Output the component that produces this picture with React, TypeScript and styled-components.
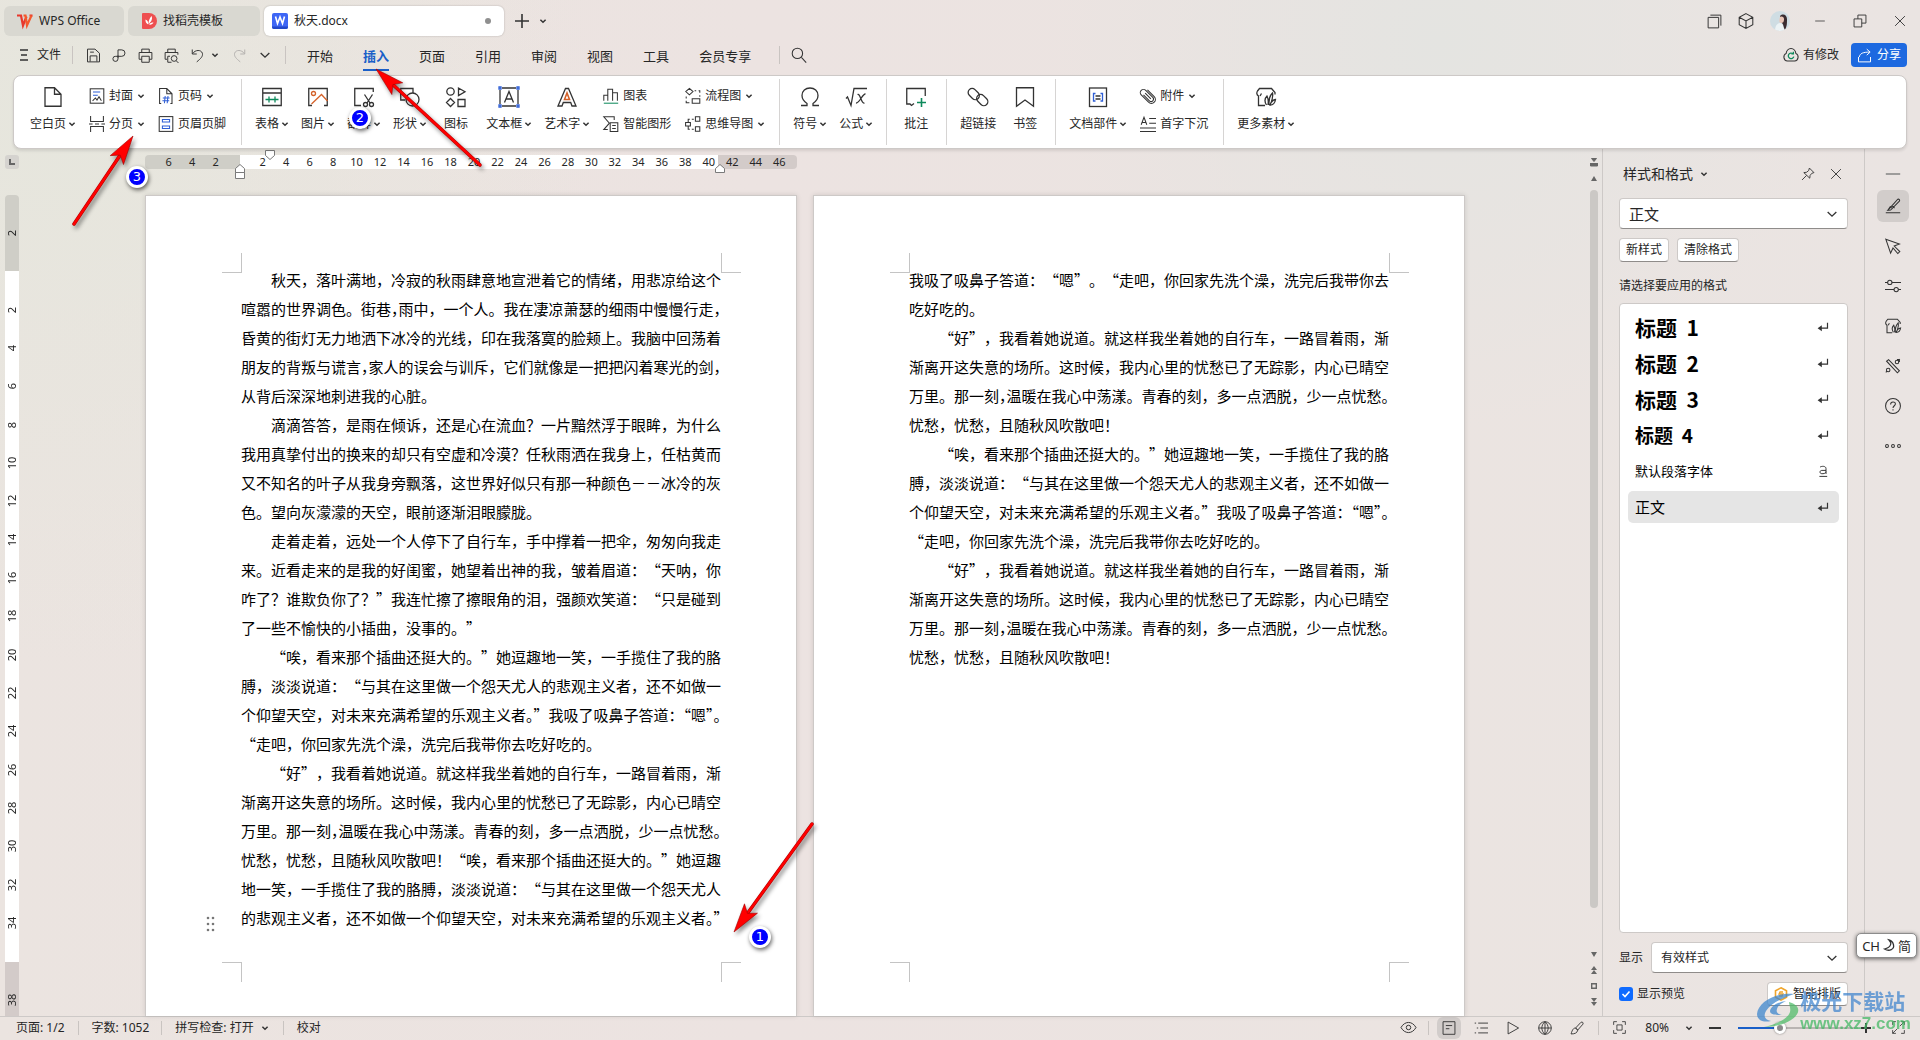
import React from "react";
import styled, { createGlobalStyle, css } from "styled-components";

const INK = "#333333";
const BLUE = "#1a5fc8";
const GREEN = "#0e8a5c";
const ORANGE = "#d4622a";
const LINE = "#cdc9c7";
const UI_FONT = '"Noto Sans", "Noto Sans CJK SC", sans-serif';
const DOC_FONT = '"Noto Sans CJK SC", sans-serif';

const GlobalStyle = createGlobalStyle`
  * { box-sizing: border-box; }
  html, body, #root { height: 100%; }
  body {
    margin: 0;
    overflow: hidden;
    font-family: ${UI_FONT};
    font-size: 12px;
    line-height: 18px;
    color: #262626;
  }
  button, select, input { font: inherit; color: inherit; margin: 0; }
  button { border: 0; padding: 0; background: none; white-space: nowrap; cursor: pointer; }
  svg { display: block; flex: none; }
`;

/* ---------- icons ---------- */

const Svg = styled.svg.attrs({ "aria-hidden": true })`
  fill: none;
  stroke: ${INK};
  stroke-width: 1.3;
  overflow: visible;
`;

const Icon = ({ name, size = 20 }: { name: string; size?: number }) => (
  <Svg width={size} height={size} viewBox="0 0 20 20">
    {ICONS[name]}
  </Svg>
);

const CaretSvg = styled(Svg)<{ $thin: boolean }>`
  stroke-width: ${(p) => (p.$thin ? 0.8 : 1.5)};
`;

const Caret = ({ size = 6 }: { size?: number }) => (
  <CaretSvg width={size} height={size} viewBox="0 0 6 6" $thin={size > 6}>
    <path d="M.4 1.8 3 4.3l2.6-2.5" />
  </CaretSvg>
);

const leaf = (
  <>
    <path d="M9 18.5H2.5V9C.5 8 .5 5.500 1.500 4L3.500 1.500h12L19 5.500v2" />
    <path d="M5.500 6.500 4 9M10.500 18C8 14 9.500 10.500 11 9c1.500 3 1.500 6 1 9M13 18c-.5-6 1.500-10 3.500-12 .8 4-.5 8-2.500 12M14 18c1-3.500 3-5 5.500-5.500-.5 3.500-2 5.500-5.500 5.500z" />
  </>
);

const ICONS: Record<string, React.ReactNode> = {
  blank: <path d="M2 .75h9.500l6.500 6.500v12H2zM11.500 .75v6.500H18" />,
  cover: (
    <>
      <rect x="1.500" y="1" width="17" height="18" />
      <path stroke="#2f5fd6" d="M5 5h9M5 9h6" />
      <path d="m4.500 16 3.500-3.500 2 2.500 2.500-4 3 5" />
    </>
  ),
  split: <path d="M2 0v7h16V0M0 10h4.500M7.500 10h5M15.500 10H20M2 20v-7h16v7" />,
  pageNo: (
    <>
      <path d="M2 20V.75h9l6.500 6.500V20M11 .75v6.500h6.500M2 19.500h2M15.500 19.500h2" />
      <path stroke="#2f5fd6" d="M6 12.500h8.500M5.500 16h8.500M9 10l-1 9M12.500 10l-1 9" />
    </>
  ),
  header: (
    <>
      <rect x="1.500" y=".75" width="17" height="18.500" />
      <path stroke="#2f5fd6" d="M5.500 4.500h9v3h-9zM5.500 12.500h9v3h-9z" />
    </>
  ),
  table: (
    <>
      <path d="M.75 1.500h18.500v17H.75zM.75 6h18.500" />
      <path stroke={GREEN} d="M3.500 12.500h13M7 9.500v6M13 9.500v6" />
    </>
  ),
  picture: (
    <>
      <path d="M4 18.500H.75v-17h18.500v17H16" />
      <path stroke={ORANGE} d="m3.500 17 10-9.500 6 6.500" />
      <circle stroke={ORANGE} cx="5.500" cy="6.500" r="2" />
    </>
  ),
  capture: (
    <>
      <path d="M7 18.500H.75v-17h18.500V5M10.500 7.500 16 16M18.500 7.500 13 16" />
      <circle cx="11.500" cy="17.500" r="2" />
      <circle cx="17.500" cy="17.500" r="2" />
    </>
  ),
  shape: (
    <>
      <path d="M5 13H.75V1.500H13V6" />
      <circle cx="12.500" cy="12.500" r="6.500" />
      <path d="m6.500 10 7 8" />
    </>
  ),
  symbols: (
    <>
      <circle cx="4.500" cy="4.500" r="3.700" />
      <path d="M12.500 1v7.500l6.500-3.800zM4.500 11.500l4 4-4 4-4-4zM12 12.500h7v7h-7z" />
    </>
  ),
  textbox: (
    <>
      <path d="M3 1h14M3 19h14M1 3v14M19 3v14M5.500 15.500 10 4.500l4.500 11M7 12h6" />
      <path stroke="#2f5fd6" d="M0 0h2v2H0zM18 0h2v2h-2zM0 18h2v2H0zM18 18h2v2h-2z" />
    </>
  ),
  wordart: (
    <>
      <path d="M1 19 8.500 1.500h3L19 19h-4l-1.300-3.500H6.300L5 19z" />
      <path stroke={ORANGE} strokeWidth="1.600" d="M7.500 12.500 10 6l2.500 6.500z" />
    </>
  ),
  chart: (
    <>
      <path d="M1 16V9h5M6 16V1.500h6V16M12 6h6v10" />
      <path stroke={GREEN} d="M1 19h18" />
    </>
  ),
  smart: (
    <>
      <path d="M14 5V1H1l7 8-7 8h5" />
      <path d="M9 8.500h9.500v11H9zM11.500 12h4.500M11.500 15.500h4.500" />
    </>
  ),
  flow: (
    <path d="m5.500.5 4.500 4-4.500 4-4.500-4zM12 3.500h2M17 3.500h1.500V6M18.500 9v2M1.500 10.500V13M1.500 16v2.500h4M9 13.500h9.500V19H9z" />
  ),
  mind: (
    <path d="M13 1h5.500v5.500H13zM13 13.500h5.500V19H13zM.75 8h6v4.500h-6zM4 8V4h2M8.500 4H11M4 12.500V16.500h2M8.500 16.500H11" />
  ),
  omega: <path d="M1 18.500h6v-2C3.500 14 2 11.500 2 8.500 2 4 5.500 1 10 1s8 3 8 7.500c0 3-1.500 5.500-5 8v2h6" />,
  formula: (
    <>
      <path d="m0 11.500 1.500-1.500 3.500 8.500L8 1.500h13" />
      <path d="M11.500 7.500c3-1.500 3.500 9.500 7 8.500M19.500 7c-3-.5-6 9.500-9.500 9" />
    </>
  ),
  comment: (
    <>
      <path d="M19.250 9V1.500H.75v15.500H4l1.500 1.500L8 16.500" />
      <path stroke={GREEN} strokeWidth="1.600" d="M11 15.500h9M15.500 11v9" />
    </>
  ),
  link: (
    <>
      <rect x="-.5" y="3" width="12.500" height="8" rx="4" transform="rotate(45 5.700 7)" />
      <rect x="8" y="9" width="12.500" height="8" rx="4" transform="rotate(45 14.200 13)" />
    </>
  ),
  bookmark: <path d="M1.500.75h17v18.500L10 13l-8.500 6.250z" />,
  parts: (
    <>
      <rect x="1.500" y="1" width="17" height="18.500" />
      <path stroke="#2f5fd6" d="M7.500 6.500h-2v7.500h2M12.500 6.500h2v7.500h-2" />
      <path d="M7.500 9h5M7.500 12h5" />
    </>
  ),
  clip: (
    <g transform="rotate(-45 10 10)">
      <path d="M7 5v10.500a3 3 0 0 0 6 0V3a4 4 0 0 0-8 0v13a5 5 0 0 0 10 0V4M10 5v10" />
    </g>
  ),
  dropcap: <path d="M0 15h20M0 19.500h20M11.500 3H20M11.500 9H20M1.500 11 5 1.500 8.500 11M3 8h4.500" />,
  leaf,
  save: <path d="M2 1.500h10L18 7v11.500H2zM5.500 18v-7.500h9V18M5.500 5.500h5" />,
  pdf: <path d="M8 13V2.500h5a4.300 4.300 0 0 1 0 8.600H5a3.400 3.400 0 1 0 3 3.500V10" />,
  print: <path d="M5 6V1.500h10V6M5 15H1.500V6h17v9H15M5 11h10v8H5z" />,
  preview: (
    <>
      <path d="M5 6V1.500h10V6M4 15H1.500V6h17v3M5 11v8h5M5 11h3" />
      <circle cx="13.500" cy="14" r="3.800" />
      <path d="m16.300 17 3 3" />
    </>
  ),
  undo: <path d="M3 2v6h6M3.500 7.500C7 2 15 2 16.500 7c1 4-2 7-7.500 11.500" />,
  redo: <path stroke="#b3b0ae" d="M17 2v6h-6M16.500 7.500C13 2 5 2 3.500 7c-1 4 2 7 7.500 11.500" />,
  search: (
    <>
      <circle cx="8" cy="8" r="6.500" />
      <path d="m13 13 6 6.500" />
    </>
  ),
  copies: <path d="M1.500 4.500h14v14h-14zM4.500 1.500h14v14" />,
  cube: <path d="m10 .75 8.500 4.500v9.500L10 19.250 1.500 14.750v-9.500zM1.500 5.250 10 10l8.500-4.750M10 10v9" />,
  restore: <path d="M1.500 7h11v11.500h-11zM7 7V1.500h11.500V13h-6" />,
  close: <path d="m3 3 14 14M17 3 3 17" />,
  dash: <path d="M2 10h16" />,
  collapse: <path stroke="#8a8a8a" strokeWidth="2" d="M1 10h18" />,
  cloud: (
    <>
      <path d="M5.500 17.500A5 5 0 0 1 4 8a6 6 0 0 1 12 0 5 5 0 0 1-1.500 9.500z" />
      <path stroke={GREEN} strokeWidth="1.600" d="M12.500 8.500A3.500 3.500 0 1 0 13.500 12M10.500 8.500h2.500V6" />
    </>
  ),
  share: <path stroke="#fff" d="M2 12v6.500h16V12M3 12c1-5 5-6.500 14-6.500M13 1.500l4.500 4-4.500 4" />,
  pin: <path d="m12 1.500 6.500 6.500-3 1-2.500 3-.5 4L4 8l4-.5L11 5zM8 12l-6.500 6.500" />,
  pen: <path d="M1 18.500h18M3.500 15.500 16 1.500c1.500-.5 3 1 2 2.500L7 15zM8.500 9.500l3.500 3M3.500 15.500l3-4.500 3 2.500" />,
  cursor: <path d="m1 1.500 17 6-6.500 2.500 7 7-2.500 2.500-6-7-3 6.500z" />,
  sliders: (
    <>
      <circle cx="6" cy="5.500" r="2.700" />
      <circle cx="14" cy="14.500" r="2.700" />
      <path d="M0 5.500h3.300M8.700 5.500H20M0 14.500h11.300M16.700 14.500H20" />
    </>
  ),
  magic: (
    <>
      <path d="m2 4 2.500-2L18 16l-2.500 2.500z" />
      <circle cx="4" cy="15" r="2.200" />
      <circle cx="15" cy="5" r="2.200" />
      <path d="m16.500 3.500 2-2M2.500 16.500l-1.500 1.500M15 2h3v3" />
    </>
  ),
  help: (
    <>
      <circle cx="10" cy="10" r="9.300" />
      <path d="M7 8c0-4 6-4 6-.5 0 2-3 2.500-3 5M10 14v1.500" />
    </>
  ),
  more: (
    <>
      <circle cx="2.500" cy="10" r="1.800" />
      <circle cx="10" cy="10" r="1.800" />
      <circle cx="17.500" cy="10" r="1.800" />
    </>
  ),
  enter: (
    <>
      <path strokeWidth="2" d="M17.500 3v9H5" />
      <path fill={INK} stroke="none" d="M1 12l7-5v10z" />
    </>
  ),
  charStyle: <path strokeWidth="1.600" d="M5 3.500c3-2 10-2 10 2.500v9M15 9H8c-4 0-4 5.500 0 5.500h2c3 0 5-2 5-3.500M4 19h13" />,
  eye: (
    <>
      <path d="M0 10c5-9 15-9 20 0-5 9-15 9-20 0z" />
      <circle cx="10" cy="10" r="3" />
    </>
  ),
  pageView: <path d="M1.500 1h17v18h-17zM5.500 6.500h9M5.500 11h5" />,
  outline: <path d="M6 3h14M9 10h11M6 17h14M1 3h2M4 10h2M1 17h2" />,
  play: <path d="M3 1.500v17l15-8.500z" />,
  globe: (
    <>
      <circle cx="10" cy="10" r="9" />
      <path d="M1 10h18M10 1v18M10 1c-6 5-6 13 0 18M10 1c6 5 6 13 0 18" />
    </>
  ),
  brush: <path d="M8 10 15.500 2c2-1.500 4 .5 3 2.500L11 13zM8 10c-3 0-4.500 2-6.500 8.500C7 18.500 10.500 17 11 13z" />,
  fit: <path d="M1 6V1h5M14 1h5v5M19 14v5h-5M6 19H1v-5M6 6h8v8H6z" />,
  expand: <path d="M1 6V1h5M14 1h5v5M19 14v5h-5M6 19H1v-5M12 8l7-7M8 12l-7 7" />,
};

/* ---------- shell ---------- */

const Shell = styled.div`
  display: flex;
  flex-direction: column;
  height: 100vh;
  position: relative;
  overflow: hidden;
  background:
    radial-gradient(circle at 75% 4%, #e4e4e1 0, rgba(228, 228, 225, 0) 22%),
    radial-gradient(circle at 3% 12%, #e6e6dd 0, rgba(230, 230, 221, 0) 26%),
    linear-gradient(90deg, #ebe4e0, #ece3e1 40%, #ebe4e1 75%, #eae4e2);
`;

const TitleBar = styled.header`
  display: flex;
  align-items: flex-start;
  gap: 4px;
  height: 37px;
  padding: 6px 0 0 4px;
`;

const DocTab = styled.button<{ $width: number; $active?: boolean; $indent: number }>`
  display: flex;
  align-items: center;
  gap: 6px;
  width: ${(p) => p.$width}px;
  height: 30px;
  padding: 0 13px 0 ${(p) => p.$indent}px;
  border-radius: 6px;
  background: ${(p) => (p.$active ? "#ffffff" : "#d9d8d1")};
  box-shadow: ${(p) => (p.$active ? "0 0 2px rgba(0,0,0,.25)" : "none")};
`;

const UnsavedDot = styled.span`
  width: 6px;
  height: 6px;
  margin-left: auto;
  border-radius: 50%;
  background: #8f8f8f;
`;

const IconButton = styled.button<{ $w?: number; $h?: number; $on?: boolean }>`
  display: grid;
  place-items: center;
  flex: none;
  width: ${(p) => p.$w ?? 18}px;
  height: ${(p) => p.$h ?? 30}px;
  border-radius: 6px;
  background: ${(p) => (p.$on ? "#d2cdcb" : "transparent")};
`;

const Spacer = styled.div`
  flex: 1;
`;

const Avatar = styled.span`
  display: grid;
  place-items: center;
  width: 20px;
  height: 20px;
  overflow: hidden;
  border-radius: 50%;
  background: #cfdde3;
`;

const MenuBar = styled.nav`
  display: flex;
  align-items: center;
  height: 38px;
  padding: 0 13px 2px 19px;
`;

const FileButton = styled.button`
  display: flex;
  align-items: center;
  gap: 8px;
`;

const Divider = styled.span<{ $before?: number; $after?: number }>`
  flex: none;
  width: 1px;
  height: 18px;
  margin: 0 ${(p) => p.$after ?? 12}px 0 ${(p) => p.$before ?? 12}px;
  background: #c9c4c1;
`;

const QuickTools = styled.div`
  display: flex;
  align-items: center;
  gap: 8px;
`;

const CaretButton = styled(IconButton)`
  width: 6px;
  margin: 0 4px 0 -2px;
`;

const MenuTabs = styled.div`
  display: flex;
  gap: 30px;
`;

const MenuTab = styled.button<{ $active?: boolean }>`
  height: 28px;
  margin-top: 3px;
  border-bottom: 2px solid transparent;
  font-size: 13px;
  line-height: 26px;
  ${(p) =>
    p.$active &&
    css`
      color: ${BLUE};
      font-weight: 700;
      border-color: ${BLUE};
    `}
`;

const CloudButton = styled.button`
  display: flex;
  align-items: center;
  gap: 4px;
  margin-right: 12px;
`;

const ShareButton = styled.button`
  display: flex;
  align-items: center;
  gap: 5px;
  height: 24px;
  padding: 0 6px;
  border-radius: 4px;
  background: #1d69e0;
  color: #ffffff;
`;

/* ---------- ribbon ---------- */

const Ribbon = styled.section`
  display: flex;
  flex: none;
  height: 74px;
  margin: 0 13px;
  padding-left: 3px;
  border: 1px solid ${LINE};
  border-radius: 8px;
  background: #ffffff;
  box-shadow: 0 2px 3px rgba(0, 0, 0, 0.1);
  position: relative;
  z-index: 1;
`;

const Group = styled.div`
  display: flex;
  align-items: flex-start;
  gap: 13px;
  margin: 3px 0;
  height: 66px;
  padding: 8px 14px 0 13px;
  border-right: 1px solid #d6d4d3;
  &:last-child { border-right: 0; }
`;

const BigButton = styled.button<{ $inset?: number }>`
  display: flex;
  flex-direction: column;
  align-items: center;
  gap: 8px;
  margin: 0 ${(p) => p.$inset ?? 0}px;
`;

const Label = styled.span`
  display: flex;
  align-items: center;
  gap: 3px;
`;

const Stack = styled.div`
  display: flex;
  flex-direction: column;
  gap: 10px;
  padding-left: 1px;
  &:last-child { margin-right: 1px; }
`;

const SmallButton = styled.button`
  display: flex;
  align-items: center;
  gap: 4px;
  & > svg + svg { margin-left: 1px; }
`;

const SmallLabel = styled.span`
  & + svg { margin-left: 1px; }
`;

type Cmd = { icon: string; label: string; caret?: boolean; inset?: number };
type Item = Cmd | Cmd[];

const RIBBON: Item[][] = [
  [
    { icon: "blank", label: "空白页", caret: true },
    [
      { icon: "cover", label: "封面", caret: true },
      { icon: "split", label: "分页", caret: true },
    ],
    [
      { icon: "pageNo", label: "页码", caret: true },
      { icon: "header", label: "页眉页脚" },
    ],
  ],
  [
    { icon: "table", label: "表格", caret: true },
    { icon: "picture", label: "图片", caret: true },
    { icon: "capture", label: "截屏", caret: true },
    { icon: "shape", label: "形状", caret: true },
    { icon: "symbols", label: "图标", inset: 5 },
    { icon: "textbox", label: "文本框", caret: true },
    { icon: "wordart", label: "艺术字", caret: true },
    [
      { icon: "chart", label: "图表" },
      { icon: "smart", label: "智能图形" },
    ],
    [
      { icon: "flow", label: "流程图", caret: true },
      { icon: "mind", label: "思维导图", caret: true },
    ],
  ],
  [
    { icon: "omega", label: "符号", caret: true },
    { icon: "formula", label: "公式", caret: true },
  ],
  [{ icon: "comment", label: "批注", inset: 4 }],
  [
    { icon: "link", label: "超链接" },
    { icon: "bookmark", label: "书签", inset: 4 },
  ],
  [
    { icon: "parts", label: "文档部件", caret: true },
    [
      { icon: "clip", label: "附件", caret: true },
      { icon: "dropcap", label: "首字下沉" },
    ],
  ],
  [{ icon: "leaf", label: "更多素材", caret: true }],
];

/* ---------- workspace ---------- */

const Workspace = styled.main`
  display: flex;
  flex: 1;
  min-height: 0;
`;

const LeftRail = styled.div`
  display: flex;
  flex-direction: column;
  gap: 26px;
  width: 24px;
  padding: 6px 5px 0;
`;

const TabStop = styled.button`
  display: grid;
  place-items: center;
  flex: none;
  width: 14px;
  height: 14px;
  border-radius: 3px;
  background: #d5d3cf;
`;

const VRuler = styled.div`
  flex: 1;
  min-height: 0;
  overflow: hidden;
  padding-top: 19px;
  border-radius: 4px 4px 0 0;
  background: linear-gradient(#cfcec7 76px, #ffffff 76px 767px, #d3cbc9 767px);
`;

const VNumbers = styled.div`
  display: grid;
  grid-template-rows: repeat(21, 1fr);
  height: 805px;
  font-size: 11px;
  line-height: 14px;
  text-align: center;
`;

const VNumber = styled.span`
  writing-mode: vertical-rl;
  transform: rotate(180deg);
`;

const Canvas = styled.div`
  display: flex;
  flex: 1;
  flex-direction: column;
  align-items: center;
  min-width: 0;
  padding-top: 6px;
`;

const Spread = styled.div`
  display: flex;
  flex-direction: column;
  flex: 1;
  gap: 26px;
  min-height: 0;
`;

const HRuler = styled.div`
  position: relative;
  flex: none;
  width: 652px;
  height: 14px;
  padding-left: 12px;
  border-radius: 4px;
  background: linear-gradient(90deg, #cfcec7 95px, #ffffff 95px 573px, #d3cbc9 573px);
`;

const HNumbers = styled.div`
  display: grid;
  grid-template-columns: repeat(27, 1fr);
  width: 634px;
  font-size: 11px;
  line-height: 13px;
  text-align: center;
`;

const IndentMarks = styled.svg`
  position: absolute;
  inset: 0;
  width: 100%;
  height: 100%;
  overflow: visible;
  fill: #ffffff;
  stroke: #7a7a7a;
`;

const Pages = styled.div`
  display: flex;
  flex: 1;
  gap: 16px;
  min-height: 0;
`;

const Page = styled.article`
  position: relative;
  width: 652px;
  padding: 69px 76px 0 95px;
  border: 1px solid ${LINE};
  border-bottom: 0;
  background: #ffffff;
  box-shadow: 0 0 5px rgba(0, 0, 0, 0.12);
  font-family: ${DOC_FONT};
  font-size: 15px;
  line-height: 29px;
  color: #000000;
  white-space: nowrap;
  text-spacing-trim: space-all;
`;

const Paragraph = styled.p<{ $flush?: boolean }>`
  margin: 0;
  text-indent: ${(p) => (p.$flush ? 0 : "2em")};
`;

const HalfWidth = styled.span`
  font-feature-settings: "halt";
`;

const Crop = styled.span<{ $v: "top" | "bottom"; $h: "left" | "right" }>`
  position: absolute;
  width: 20px;
  height: 20px;
  border: 0 solid #c4c4c4;
  ${(p) => (p.$v === "top" ? "top: 57px; border-bottom-width: 1px;" : "top: 766px; border-top-width: 1px;")}
  ${(p) => (p.$h === "left" ? "left: 76px; border-right-width: 1px;" : "right: 55px; border-left-width: 1px;")}
`;

const DragHandle = styled.svg`
  position: absolute;
  left: 60px;
  top: 720px;
  fill: #777777;
`;

/* A "~" after a mark sets that mark at half width. */
const PAGE_ONE: string[][] = [
  [
    "秋天，落叶满地，冷寂的秋雨肆意地宣泄着它的情绪，用悲凉给这个",
    "喧嚣的世界调色。街巷，~雨中，一个人。我在凄凉萧瑟的细雨中慢慢行走，",
    "昏黄的街灯无力地洒下冰冷的光线，印在我落寞的脸颊上。我脑中回荡着",
    "朋友的背叛与谎言，~家人的误会与训斥，它们就像是一把把闪着寒光的剑，",
    "从背后深深地刺进我的心脏。",
  ],
  [
    "滴滴答答，是雨在倾诉，还是心在流血？一片黯然浮于眼眸，为什么",
    "我用真挚付出的换来的却只有空虚和冷漠？任秋雨洒在我身上，任枯黄而",
    "又不知名的叶子从我身旁飘落，这世界好似只有那一种颜色－－冰冷的灰",
    "色。望向灰濛濛的天空，眼前逐渐泪眼朦胧。",
  ],
  [
    "走着走着，远处一个人停下了自行车，手中撑着一把伞，匆匆向我走",
    "来。近看走来的是我的好闺蜜，她望着出神的我，皱着眉道：“天呐，你",
    "咋了？谁欺负你了？”我连忙擦了擦眼角的泪，强颜欢笑道：“只是碰到",
    "了一些不愉快的小插曲，没事的。”",
  ],
  [
    "“唉，看来那个插曲还挺大的。”她逗趣地一笑，一手揽住了我的胳",
    "膊，淡淡说道：“与其在这里做一个怨天尤人的悲观主义者，还不如做一",
    "个仰望天空，对未来充满希望的乐观主义者。~”我吸了吸鼻子答道：~“嗯”~。",
    "“走吧，你回家先洗个澡，洗完后我带你去吃好吃的。",
  ],
  [
    "“好”，我看着她说道。就这样我坐着她的自行车，一路冒着雨，渐",
    "渐离开这失意的场所。这时候，我内心里的忧愁已了无踪影，内心已晴空",
    "万里。那一刻，~温暖在我心中荡漾。青春的刻，多一点洒脱，少一点忧愁。",
    "忧愁，忧愁，且随秋风吹散吧！“唉，看来那个插曲还挺大的。”她逗趣",
    "地一笑，一手揽住了我的胳膊，淡淡说道：“与其在这里做一个怨天尤人",
    "的悲观主义者，还不如做一个仰望天空，对未来充满希望的乐观主义者。~”",
  ],
];

const GOOD = [
  "“好”，我看着她说道。就这样我坐着她的自行车，一路冒着雨，渐",
  "渐离开这失意的场所。这时候，我内心里的忧愁已了无踪影，内心已晴空",
  "万里。那一刻，~温暖在我心中荡漾。青春的刻，多一点洒脱，少一点忧愁。",
  "忧愁，忧愁，且随秋风吹散吧！",
];

const PAGE_TWO: string[][] = [
  ["我吸了吸鼻子答道：“嗯”。“走吧，你回家先洗个澡，洗完后我带你去", "吃好吃的。"],
  GOOD,
  PAGE_ONE[3],
  GOOD,
];

const typeset = (line: string) =>
  line.split(/(.~)/).map((part, i) =>
    part.endsWith("~") ? <HalfWidth key={i}>{part[0]}</HalfWidth> : part
  );

const Text = ({ paragraphs, continued }: { paragraphs: string[][]; continued?: boolean }) => (
  <>
    {paragraphs.map((lines, i) => (
      <Paragraph key={i} $flush={continued && i === 0}>
        {lines.map((line, j) => (
          <React.Fragment key={j}>
            {j > 0 && <br />}
            {typeset(line)}
          </React.Fragment>
        ))}
      </Paragraph>
    ))}
    <Crop $v="top" $h="left" />
    <Crop $v="top" $h="right" />
    <Crop $v="bottom" $h="left" />
    <Crop $v="bottom" $h="right" />
  </>
);

const ScrollRail = styled.div`
  display: flex;
  flex-direction: column;
  align-items: center;
  width: 16px;
  padding: 5px 0 6px;
`;

const Thumb = styled.div`
  flex: 1;
  width: 8px;
  margin: 4px 0 38px;
  border-radius: 4px;
  background: #cbc8c5;
`;

const ScrollButton = styled.button`
  display: grid;
  place-items: center;
  width: 16px;
  height: 16px;
  svg { fill: #666666; stroke: #666666; }
`;

/* ---------- style panel ---------- */

const Panel = styled.aside`
  display: flex;
  flex-direction: column;
  gap: 9px;
  width: 262px;
  padding: 0 16px 10px;
  border-left: 1px solid ${LINE};
`;

const PanelHeader = styled.div`
  display: flex;
  align-items: center;
  height: 40px;
  padding: 10px 5px 0 4px;
  gap: 8px;
`;

const PanelTitle = styled.h2`
  margin: 0;
  font-size: 14px;
  font-weight: 400;
`;

const PanelActions = styled.div`
  display: flex;
  gap: 14px;
  margin-left: auto;
`;

const SelectBox = styled.div<{ $size: number }>`
  display: grid;
  flex: 1;
  align-items: center;
  height: 31px;
  border: 1px solid ${LINE};
  border-bottom-color: #8f8c8a;
  border-radius: 4px;
  background: #ffffff;
  font-size: ${(p) => p.$size}px;
  & > * { grid-area: 1 / 1; }
  & > svg { justify-self: end; margin-right: 10px; pointer-events: none; }
`;

const Select = styled.select`
  width: 100%;
  height: 29px;
  padding: 0 9px;
  border: 0;
  background: transparent;
  appearance: none;
  outline: none;
`;

const FieldRow = styled.div`
  display: flex;
  align-items: center;
  flex: none;
  gap: 8px;
`;

const OutlineButton = styled.button`
  display: flex;
  align-items: center;
  gap: 5px;
  height: 24px;
  padding: 0 6px;
  border: 1px solid ${LINE};
  border-bottom-color: #8f8c8a;
  border-radius: 4px;
  background: #ffffff;
`;

const Caption = styled.div`
  padding: 6px 0 0;
`;

const StyleList = styled.ul`
  display: flex;
  flex: 1;
  flex-direction: column;
  gap: 4px;
  margin: -1px 0 0;
  padding: 7px 8px;
  border: 1px solid ${LINE};
  border-radius: 4px;
  background: #ffffff;
  list-style: none;
`;

const StyleItem = styled.button<{ $size: number; $bold?: boolean; $on?: boolean }>`
  display: flex;
  align-items: center;
  justify-content: space-between;
  width: 100%;
  height: 32px;
  padding: 0 10px 0 7px;
  border-radius: 5px;
  background: ${(p) => (p.$on ? "#e5e5e5" : "transparent")};
  font-family: ${DOC_FONT};
  font-size: ${(p) => p.$size}px;
  font-weight: ${(p) => (p.$bold ? 700 : 400)};
  line-height: 32px;
  color: #000000;
  white-space: pre;
`;

const CheckLabel = styled.label`
  display: flex;
  align-items: center;
  gap: 4px;
  margin-right: auto;
`;

const CheckCell = styled.span`
  display: grid;
  place-items: center;
  & > * { grid-area: 1 / 1; }
  svg { pointer-events: none; }
`;

const Check = styled.input`
  width: 14px;
  height: 14px;
  border-radius: 3px;
  background: #0f6bff;
  appearance: none;
`;

const SideBar = styled.nav`
  display: flex;
  flex-direction: column;
  align-items: center;
  gap: 8px;
  width: 56px;
  padding-top: 17px;
  border-left: 1px solid ${LINE};
`;

/* ---------- status bar ---------- */

const StatusBar = styled.footer`
  display: flex;
  align-items: center;
  flex: none;
  height: 24px;
  padding: 0 13px 2px 16px;
  border-top: 1px solid ${LINE};
`;

const StatusText = styled.div`
  display: flex;
  align-items: center;
`;

const StatusButton = styled.button`
  display: flex;
  align-items: center;
  gap: 8px;
`;

const StatusDivider = styled(Divider)`
  height: 14px;
`;

const ViewButtons = styled.div`
  display: flex;
  align-items: center;
  gap: 8px;
`;

const ZoomTools = styled.div`
  display: flex;
  align-items: center;
  gap: 17px;
`;

const ZoomSlide = styled.div`
  display: flex;
  align-items: center;
  gap: 2px;
`;

const Zoom = styled.input`
  width: 120px;
  height: 12px;
  background: transparent;
  appearance: none;
  &::-webkit-slider-runnable-track {
    height: 2px;
    background: linear-gradient(90deg, ${BLUE} 35%, #b9b4b2 35%);
  }
  &::-webkit-slider-thumb {
    width: 12px;
    height: 12px;
    margin-top: -5px;
    border: 3px solid #ffffff;
    border-radius: 50%;
    background: #8a8a8a;
    box-shadow: 0 0 2px rgba(0, 0, 0, 0.5);
    appearance: none;
  }
`;

/* ---------- overlays ---------- */

const Notes = styled.svg`
  position: absolute;
  inset: 0;
  z-index: 3;
  width: 100%;
  height: 100%;
  pointer-events: none;
  filter: drop-shadow(2px 3px 2px rgba(0, 0, 0, 0.45));
`;

const NoteBadge = styled.span<{ $x: number; $y: number }>`
  position: absolute;
  z-index: 4;
  left: ${(p) => p.$x - 11}px;
  top: ${(p) => p.$y - 11}px;
  width: 22px;
  height: 22px;
  border: 3px solid #ffffff;
  border-radius: 50%;
  background: #0000ff;
  box-shadow: 1px 2px 4px rgba(0, 0, 0, 0.6);
  font-family: "DejaVu Sans", sans-serif;
  font-size: 13px;
  line-height: 16px;
  text-align: center;
  color: #ffffff;
`;

const ImeBar = styled.div`
  position: absolute;
  z-index: 3;
  right: 3px;
  bottom: 82px;
  display: flex;
  align-items: center;
  gap: 3px;
  height: 25px;
  padding: 0 5px;
  border: 1px solid #8c8c8c;
  border-radius: 5px;
  background: #ffffff;
  box-shadow: 0 1px 4px rgba(0, 0, 0, 0.6);
  font-size: 13px;
`;

const Watermark = styled.div`
  position: absolute;
  z-index: 4;
  right: 9px;
  bottom: 8px;
  display: flex;
  align-items: center;
  opacity: 0.75;
  pointer-events: none;
`;

const WatermarkText = styled.div`
  font-size: 21px;
  line-height: 28px;
  font-weight: 700;
  color: #4487cf;
`;

const WatermarkUrl = styled.div`
  font-family: "Liberation Sans", sans-serif;
  font-size: 17px;
  line-height: 17px;
  font-weight: 700;
  color: #45b865;
`;

const Arrow = ({ from, to }: { from: [number, number]; to: [number, number] }) => {
  const dx = from[0] - to[0];
  const dy = from[1] - to[1];
  const len = Math.hypot(dx, dy);
  const at = (along: number, across: number) =>
    [to[0] + (dx * along - dy * across) / len, to[1] + (dy * along + dx * across) / len].join(",");
  const [nx, ny] = at(22, 0).split(",");
  return (
    <g>
      <line x1={from[0]} y1={from[1]} x2={nx} y2={ny} stroke="#b00000" strokeWidth="3.500" strokeLinecap="round" />
      <line x1={from[0]} y1={from[1]} x2={nx} y2={ny} stroke="#ff0000" strokeWidth="2.400" strokeLinecap="round" />
      <polygon points={[at(0, 0), at(29, 8), at(23, 0), at(29, -8)].join(" ")} fill="#ff0000" stroke="#a00000" strokeWidth=".6" />
    </g>
  );
};

const STYLES = [
  { label: "标题  1", size: 21, bold: true },
  { label: "标题  2", size: 21, bold: true },
  { label: "标题  3", size: 21, bold: true },
  { label: "标题  4", size: 19, bold: true },
  { label: "默认段落字体", size: 13, char: true },
  { label: "正文", size: 15, on: true },
];

const H_NUMBERS = [6, 4, 2, 0, ...Array.from({ length: 23 }, (_, i) => (i + 1) * 2)];
const V_NUMBERS = [2, 0, ...Array.from({ length: 19 }, (_, i) => (i + 1) * 2)];

const isStack = (item: Item): item is Cmd[] => Array.isArray(item);

export default function App() {
  return (
    <Shell lang="zh-CN">
      <GlobalStyle />
      <TitleBar>
        <DocTab $width={120} $indent={13}>
          <Svg width="16" height="14" viewBox="0 0 16 14">
            <path stroke="#e8372c" strokeWidth="2.200" d="M0 1.500h4l2 10 3.500-9M15.500 1.500h-3" />
            <path stroke="#f4582c" strokeWidth="2.200" d="M6.500 1.500h2l1.500 10 4.500-10" />
          </Svg>
          WPS Office
        </DocTab>
        <DocTab $width={132} $indent={14}>
          <Svg width="15" height="16" viewBox="0 0 15 16">
            <path fill="#ee4f50" stroke="none" d="M1 0h6a8 8 0 0 1 0 16H1a1 1 0 0 1-1-1V1a1 1 0 0 1 1-1z" />
            <path fill="#fff" stroke="none" d="M9.500 3c1.500 3-.5 6-3 8 0-3 1-6 3-8zM3.500 6.500c2 .5 3 2.500 2.700 5-2-1-3-3-2.700-5zM7 11.500c1-1.500 2.500-2 4.500-2-1 1.800-2.500 2.500-4.500 2z" />
          </Svg>
          找稻壳模板
        </DocTab>
        <DocTab $width={240} $indent={8} $active>
          <Svg width="16" height="16" viewBox="0 0 16 16">
            <rect width="16" height="16" rx="2" fill="#3e66f5" stroke="none" />
            <path fill="#2247c9" stroke="none" d="M0 13.500h16V14a2 2 0 0 1-2 2H2a2 2 0 0 1-2-2z" />
            <path stroke="#fff" strokeWidth="1.600" d="m3.500 3.500 2 7L8 4l2.500 6.500 2-7" />
          </Svg>
          秋天.docx
          <UnsavedDot />
        </DocTab>
        <IconButton $w={28} aria-label="新建">
          <Svg width="14" height="14" viewBox="0 0 14 14">
            <path strokeWidth="1.600" d="M0 7h14M7 0v14" />
          </Svg>
        </IconButton>
        <IconButton $w={6} aria-label="标签列表"><Caret /></IconButton>
        <Spacer />
        <IconButton $w={28} aria-label="窗口"><Icon name="copies" size={15} /></IconButton>
        <IconButton $w={28} aria-label="应用"><Icon name="cube" size={16} /></IconButton>
        <IconButton $w={32} aria-label="账户">
          <Avatar>
            <svg width="20" height="20" viewBox="0 0 20 20" aria-hidden="true">
              <path fill="#ecf3f5" d="M5 20c0-6 3-8 5-8s5 4 5 8z" />
              <path fill="#3a2c30" d="M10 5c3-3 7-1 7 3 0 5 0 7-2 11-2-3-1-5-3-7l-2-2z" />
              <path fill="#e9c6b8" d="M10 6c2-1 4 0 4 2 0 3-1 4-3 4S9 9 10 6z" />
            </svg>
          </Avatar>
        </IconButton>
        <IconButton $w={40} aria-label="最小化"><Icon name="dash" size={12} /></IconButton>
        <IconButton $w={32} aria-label="还原"><Icon name="restore" size={14} /></IconButton>
        <IconButton $w={40} aria-label="关闭"><Icon name="close" size={14} /></IconButton>
      </TitleBar>

      <MenuBar>
        <FileButton>
          <Svg width="10" height="12" viewBox="0 0 10 12">
            <path d="M1 1h8M2 6h6M1 11h8" />
          </Svg>
          文件
        </FileButton>
        <Divider $before={11} $after={11} />
        <QuickTools>
          {["save", "pdf", "print", "preview", "undo"].map((n) => (
            <IconButton key={n} aria-label={n}><Icon name={n} size={15} /></IconButton>
          ))}
          <CaretButton aria-label="撤销列表"><Caret /></CaretButton>
          <IconButton aria-label="redo"><Icon name="redo" size={15} /></IconButton>
          <IconButton aria-label="自定义"><Caret size={10} /></IconButton>
        </QuickTools>
        <Divider $before={11} $after={21} />
        <MenuTabs>
          {["开始", "插入", "页面", "引用", "审阅", "视图", "工具", "会员专享"].map((t) => (
            <MenuTab key={t} $active={t === "插入"}>{t}</MenuTab>
          ))}
        </MenuTabs>
        <Divider $before={28} $after={10} />
        <IconButton aria-label="搜索"><Icon name="search" size={16} /></IconButton>
        <Spacer />
        <CloudButton>
          <Icon name="cloud" size={16} />
          有修改
        </CloudButton>
        <ShareButton>
          <Icon name="share" size={15} />
          分享
        </ShareButton>
      </MenuBar>

      <Ribbon>
        {RIBBON.map((group, g) => (
          <Group key={g}>
            {group.map((item, i) =>
              isStack(item) ? (
                <Stack key={i}>
                  {item.map((c) => (
                    <SmallButton key={c.label}>
                      <Icon name={c.icon} size={16} />
                      <SmallLabel>{c.label}</SmallLabel>
                      {c.caret && <Caret />}
                    </SmallButton>
                  ))}
                </Stack>
              ) : (
                <BigButton key={i} $inset={item.inset}>
                  <Icon name={item.icon} />
                  <Label>
                    {item.label}
                    {item.caret && <Caret />}
                  </Label>
                </BigButton>
              )
            )}
          </Group>
        ))}
      </Ribbon>

      <Workspace>
        <LeftRail>
          <TabStop aria-label="制表符">
            <Svg width="6" height="6" viewBox="0 0 6 6"><path strokeWidth="2" stroke="#666" d="M1 0v5h5" /></Svg>
          </TabStop>
          <VRuler>
            <VNumbers>
              {V_NUMBERS.map((n, i) => (
                <VNumber key={i}>{n === 0 || n === 36 ? "" : n}</VNumber>
              ))}
            </VNumbers>
          </VRuler>
        </LeftRail>

        <Canvas>
          <Spread>
            <HRuler>
              <HNumbers>
                {H_NUMBERS.map((n, i) => (
                  <span key={i}>{n || ""}</span>
                ))}
              </HNumbers>
              <IndentMarks aria-hidden="true">
                <path d="M120.500-4.500h9v5l-4.500 4-4.500-4z" />
                <path d="M90.500 17.500v-4l4.500-4 4.500 4v4zM90.500 17.500h9v6h-9z" />
                <path d="M570.500 17.500v-4l4.500-4 4.500 4v4z" />
              </IndentMarks>
            </HRuler>
            <Pages>
              <Page>
                <Text paragraphs={PAGE_ONE} />
                <DragHandle width="10" height="16" viewBox="0 0 10 16" aria-hidden="true">
                  {[2, 8, 14].map((y) => (
                    <React.Fragment key={y}>
                      <circle cx="2" cy={y} r="1.300" />
                      <circle cx="7" cy={y} r="1.300" />
                    </React.Fragment>
                  ))}
                </DragHandle>
              </Page>
              <Page>
                <Text paragraphs={PAGE_TWO} continued />
              </Page>
            </Pages>
          </Spread>
        </Canvas>

        <ScrollRail>
          <ScrollButton aria-label="拆分"><svg width="8" height="9" viewBox="0 0 8 9"><path d="M1.500 .5h5L4 3.500zM.5 5v3h7V5M4 5v3" /></svg></ScrollButton>
          <ScrollButton aria-label="向上"><svg width="6" height="5" viewBox="0 0 6 5"><path stroke="none" d="M0 5h6L3 0z" /></svg></ScrollButton>
          <Thumb />
          <ScrollButton aria-label="向下"><svg width="6" height="5" viewBox="0 0 6 5"><path stroke="none" d="M0 0h6L3 5z" /></svg></ScrollButton>
          <ScrollButton aria-label="上一页"><svg width="6" height="8" viewBox="0 0 6 8"><path stroke="none" d="M0 4h6L3 0zM0 8h6L3 4z" /></svg></ScrollButton>
          <ScrollButton aria-label="选择浏览对象"><svg width="6" height="6" viewBox="0 0 6 6"><path fill="none" strokeWidth="1.400" d="M.7 .7h4.600v4.600H.7z" /></svg></ScrollButton>
          <ScrollButton aria-label="下一页"><svg width="6" height="8" viewBox="0 0 6 8"><path stroke="none" d="M0 0h6L3 4zM0 4h6L3 8z" /></svg></ScrollButton>
        </ScrollRail>

        <Panel>
          <PanelHeader>
            <PanelTitle>样式和格式</PanelTitle>
            <Caret />
            <PanelActions>
              <IconButton $w={14} $h={20} aria-label="固定"><Icon name="pin" size={14} /></IconButton>
              <IconButton $w={14} $h={20} aria-label="关闭面板"><Icon name="close" size={14} /></IconButton>
            </PanelActions>
          </PanelHeader>
          <FieldRow>
            <SelectBox $size={15}>
              <Select aria-label="当前样式" defaultValue="正文"><option>正文</option></Select>
              <Caret size={10} />
            </SelectBox>
          </FieldRow>
          <FieldRow>
            <OutlineButton>新样式</OutlineButton>
            <OutlineButton>清除格式</OutlineButton>
          </FieldRow>
          <Caption>请选择要应用的格式</Caption>
          <StyleList>
            {STYLES.map((s) => (
              <li key={s.label}>
                <StyleItem $size={s.size} $bold={s.bold} $on={s.on}>
                  {s.label}
                  <Icon name={s.char ? "charStyle" : "enter"} size={12} />
                </StyleItem>
              </li>
            ))}
          </StyleList>
          <FieldRow>
            <label htmlFor="show-styles">显示</label>
            <SelectBox $size={12}>
              <Select id="show-styles" defaultValue="有效样式"><option>有效样式</option></Select>
              <Caret size={10} />
            </SelectBox>
          </FieldRow>
          <FieldRow>
            <CheckLabel>
              <CheckCell>
                <Check type="checkbox" defaultChecked />
                <Svg width="8" height="8" viewBox="0 0 8 8"><path stroke="#fff" strokeWidth="1.600" d="m.5 4 2.500 2.500L7.500 1.500" /></Svg>
              </CheckCell>
              显示预览
            </CheckLabel>
            <OutlineButton>
              <Svg width="14" height="14" viewBox="0 0 14 14">
                <path stroke="#efa52c" strokeWidth="1.600" d="m7 .8 5.500 3v6.400L7 13.200l-5.500-3V3.800z" />
                <path stroke="#efa52c" d="M9 5H6L5 7h4l-1 2H5" />
              </Svg>
              智能排版
            </OutlineButton>
          </FieldRow>
        </Panel>

        <SideBar>
          <IconButton $w={32} $h={16} aria-label="收起"><Icon name="collapse" size={16} /></IconButton>
          {["pen", "cursor", "sliders", "leaf", "magic", "help", "more"].map((n) => (
            <IconButton key={n} $w={32} $h={32} $on={n === "pen"} aria-label={n}><Icon name={n} size={16} /></IconButton>
          ))}
        </SideBar>
      </Workspace>

      <StatusBar>
        <StatusText>页面: 1/2</StatusText>
        <StatusDivider $before={13} $after={13} />
        <StatusText>字数: 1052</StatusText>
        <StatusDivider $before={12} $after={13} />
        <StatusButton>拼写检查: 打开 <Caret /></StatusButton>
        <StatusDivider $before={15} $after={13} />
        <StatusButton>校对</StatusButton>
        <Spacer />
        <IconButton $h={22} aria-label="护眼"><Icon name="eye" size={15} /></IconButton>
        <StatusDivider $before={11} $after={8} />
        <ViewButtons>
          {["pageView", "outline", "play", "globe", "brush"].map((n) => (
            <IconButton key={n} $w={24} $h={22} $on={n === "pageView"} aria-label={n}><Icon name={n} size={14} /></IconButton>
          ))}
        </ViewButtons>
        <StatusDivider $before={9} $after={11} />
        <ZoomTools>
          <IconButton $h={22} aria-label="适应"><Icon name="fit" size={13} /></IconButton>
          <StatusButton>80%</StatusButton>
          <IconButton $w={6} $h={22} aria-label="缩放比例"><Caret /></IconButton>
          <IconButton $w={12} $h={22} aria-label="缩小">
            <Svg width="12" height="2" viewBox="0 0 12 2"><path strokeWidth="2" d="M0 1h12" /></Svg>
          </IconButton>
          <ZoomSlide>
            <Zoom type="range" min={0} max={100} defaultValue={33} aria-label="缩放" />
            <IconButton $w={12} $h={22} aria-label="放大">
              <Svg width="10" height="10" viewBox="0 0 10 10"><path strokeWidth="2" d="M0 5h10M5 0v10" /></Svg>
            </IconButton>
          </ZoomSlide>
          <IconButton $h={22} aria-label="全屏"><Icon name="expand" size={13} /></IconButton>
        </ZoomTools>
      </StatusBar>

      <Notes aria-hidden="true">
        <Arrow from={[812, 824]} to={[734, 932]} />
        <Arrow from={[480, 165]} to={[376, 69]} />
        <Arrow from={[74, 224]} to={[133, 136]} />
      </Notes>
      <NoteBadge $x={760} $y={937}>1</NoteBadge>
      <NoteBadge $x={360} $y={118}>2</NoteBadge>
      <NoteBadge $x={137} $y={177}>3</NoteBadge>

      <ImeBar>
        CH
        <Svg width="12" height="13" viewBox="0 0 12 13"><path d="M6 1c3 3 2.500 7-4.500 9 5 3 10 0 9-4C10 3 8 1.500 6 1z" /></Svg>
        简
      </ImeBar>

      <Watermark>
        <svg width="44" height="36" viewBox="0 0 44 36" aria-hidden="true">
          <path fill="#3f87cd" d="M38 2C20 0 2 10 1 22c0 6 6 9 14 7-6-1-8-5-5-10C15 11 27 6 38 2z" />
          <path fill="#3f87cd" d="M30 9c-8 1-15 5-16 10 0 4 6 4 12 4-5-1-6-3-5-6 1-4 5-6 9-8z" />
          <path fill="#52bd6b" d="M33 10c12 3 12 12 2 18-8 5-18 7-27 7 12-3 24-8 26-15 1-4-1-7-1-10z" />
        </svg>
        <div>
          <WatermarkText>极光下载站</WatermarkText>
          <WatermarkUrl>www.xz7.com</WatermarkUrl>
        </div>
      </Watermark>
    </Shell>
  );
}
